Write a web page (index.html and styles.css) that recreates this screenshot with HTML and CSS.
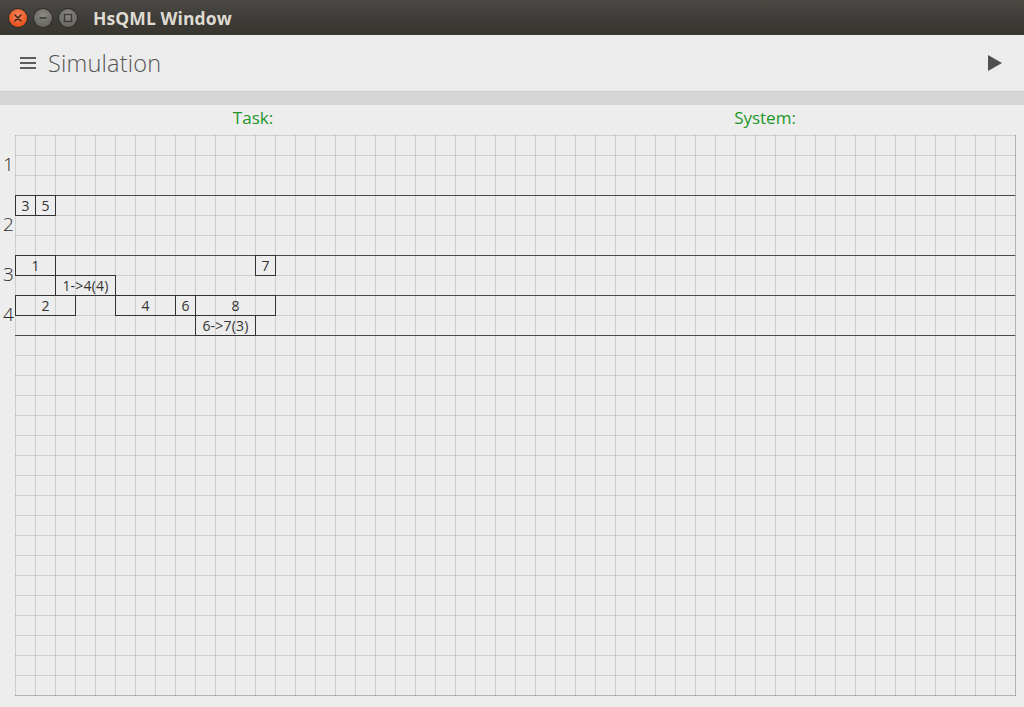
FILE: index.html
```html
<!DOCTYPE html>
<html>
<head>
<meta charset="utf-8">
<link rel="stylesheet" href="styles.css">
</head>
<body>
<div class="window">
  <header class="titlebar">
    <div class="wm-buttons">
      <span class="wm-btn wm-close"><svg viewBox="0 0 18 18" width="18" height="18"><path d="M6 6 L12 12 M12 6 L6 12" stroke="#3a2a22" stroke-width="1.6" stroke-linecap="round"/></svg></span>
      <span class="wm-btn wm-min"><svg viewBox="0 0 18 18" width="18" height="18"><path d="M5.5 9 H12.5" stroke="#3c3b37" stroke-width="1.6"/></svg></span>
      <span class="wm-btn wm-max"><svg viewBox="0 0 18 18" width="18" height="18"><rect x="5.5" y="5.5" width="7" height="7" fill="none" stroke="#3c3b37" stroke-width="1.4"/></svg></span>
    </div>
    <div class="title">HsQML Window</div>
  </header>

  <div class="toolbar">
    <div class="toolbar-left">
      <svg class="menu-icon" viewBox="0 0 16 14" width="16" height="14"><rect x="0" y="1" width="16" height="2" fill="#5d5d5d"/><rect x="0" y="6" width="16" height="2" fill="#5d5d5d"/><rect x="0" y="11" width="16" height="2" fill="#5d5d5d"/></svg>
      <span class="page-title">Simulation</span>
    </div>
    <svg class="play-icon" viewBox="0 0 14 16" width="14" height="16"><path d="M0 0 L14 8 L0 16 Z" fill="#4f4f4f"/></svg>
  </div>
  <div class="strip"></div>

  <div class="headers">
    <div class="header-cell">Task:</div>
    <div class="header-cell">System:</div>
  </div>

  <div class="chart-row">
    <div class="lane-labels">
      <div class="lane-label l60">1</div>
      <div class="lane-label l60b">2</div>
      <div class="lane-label l40">3</div>
      <div class="lane-label l40">4</div>
    </div>
    <div class="chart">
      <div class="lanes">
        <div class="lane lane-a"></div>
        <div class="lane lane-b"></div>
        <div class="lane lane-c"></div>
        <div class="lane lane-c"></div>
      </div>
      <div class="job" style="left:0;top:60px;width:21px">3</div>
      <div class="job" style="left:20px;top:60px;width:21px">5</div>
      <div class="job" style="left:0;top:120px;width:41px">1</div>
      <div class="job" style="left:240px;top:120px;width:21px">7</div>
      <div class="job" style="left:40px;top:140px;width:61px">1-&gt;4(4)</div>
      <div class="job" style="left:0;top:160px;width:61px">2</div>
      <div class="job" style="left:100px;top:160px;width:61px">4</div>
      <div class="job" style="left:160px;top:160px;width:21px">6</div>
      <div class="job" style="left:180px;top:160px;width:81px">8</div>
      <div class="job" style="left:180px;top:180px;width:61px">6-&gt;7(3)</div>
    </div>
  </div>
</div>
</body>
</html>
```

FILE: styles.css
```css
* { box-sizing: border-box; }
html, body {
  margin: 0;
  padding: 0;
  width: 1024px;
  height: 707px;
  overflow: hidden;
  background: #ededed;
  font-family: "Open Sans", "DejaVu Sans", sans-serif;
}
.window {
  display: flex;
  flex-direction: column;
  height: 707px;
}
.titlebar {
  height: 35px;
  flex: none;
  display: flex;
  align-items: center;
  background: linear-gradient(#4a4944, #3c3b37 60%, #37362f);
  padding-left: 9px;
}
.wm-buttons {
  display: flex;
  gap: 7px;
}
.wm-btn {
  width: 18px;
  height: 18px;
  border-radius: 50%;
  display: flex;
}
.wm-close {
  background: radial-gradient(circle at 50% 35%, #f8855a, #e9541f 70%, #c8461a);
  box-shadow: 0 0 0 1px #2e2d29;
}
.wm-min, .wm-max {
  background: radial-gradient(circle at 50% 35%, #8a8983, #6a6964 70%, #55544f);
  box-shadow: 0 0 0 1px #2e2d29;
}
.title {
  margin-left: 16px;
  color: #dfdbd2;
  font-weight: 700;
  font-size: 17.5px;
  letter-spacing: 0.1px;
}
.toolbar {
  height: 57px;
  flex: none;
  display: flex;
  align-items: center;
  justify-content: space-between;
  background: #ececec;
  border-bottom: 1px solid #cdcdcd;
  padding: 0 22px 0 20px;
}
.toolbar-left {
  display: flex;
  align-items: center;
  gap: 12px;
}
.page-title {
  font-size: 23.5px;
  font-weight: 300;
  color: #555;
  letter-spacing: 0.2px;
  margin-top: 0;
}
.strip {
  height: 13px;
  flex: none;
  background: #d6d6d6;
}
.headers {
  height: 30px;
  flex: none;
  display: flex;
}
.header-cell {
  flex: 1;
  text-align: center;
  color: #23962a;
  font-size: 17px;
  line-height: 26px;
  padding-right: 6px;
}
.chart-row {
  display: flex;
}
.lane-labels {
  width: 15px;
  display: flex;
  flex-direction: column;
}
.lane-label {
  font-size: 19px;
  color: #2a2a2a;
  display: flex;
  align-items: center;
  padding-left: 3px;
  padding-bottom: 4px;
  font-weight: 300;
}
.l60 { height: 61px; }
.l60b { height: 60px; }
.l40 { height: 40px; }
.chart {
  position: relative;
  width: 1001px;
  height: 561px;
  background-image:
    linear-gradient(to right, rgba(0,0,0,0.13) 1px, transparent 1px),
    linear-gradient(to bottom, rgba(0,0,0,0.13) 1px, transparent 1px);
  background-size: 20px 20px;
  border-right: 1px solid rgba(0,0,0,0.13);
  border-bottom: 1px solid rgba(0,0,0,0.13);
}
.lanes {
  display: flex;
  flex-direction: column;
}
.lane {
  border-bottom: 1px solid #4a4a4a;
  width: 1000px;
}
.lane-a { height: 61px; }
.lane-b { height: 60px; }
.lane-c { height: 40px; }
.job {
  position: absolute;
  height: 21px;
  border: 1px solid #333;
  font-size: 14px;
  line-height: 19px;
  color: #333;
  text-align: center;
  white-space: nowrap;
  letter-spacing: 0.2px;
}
```
